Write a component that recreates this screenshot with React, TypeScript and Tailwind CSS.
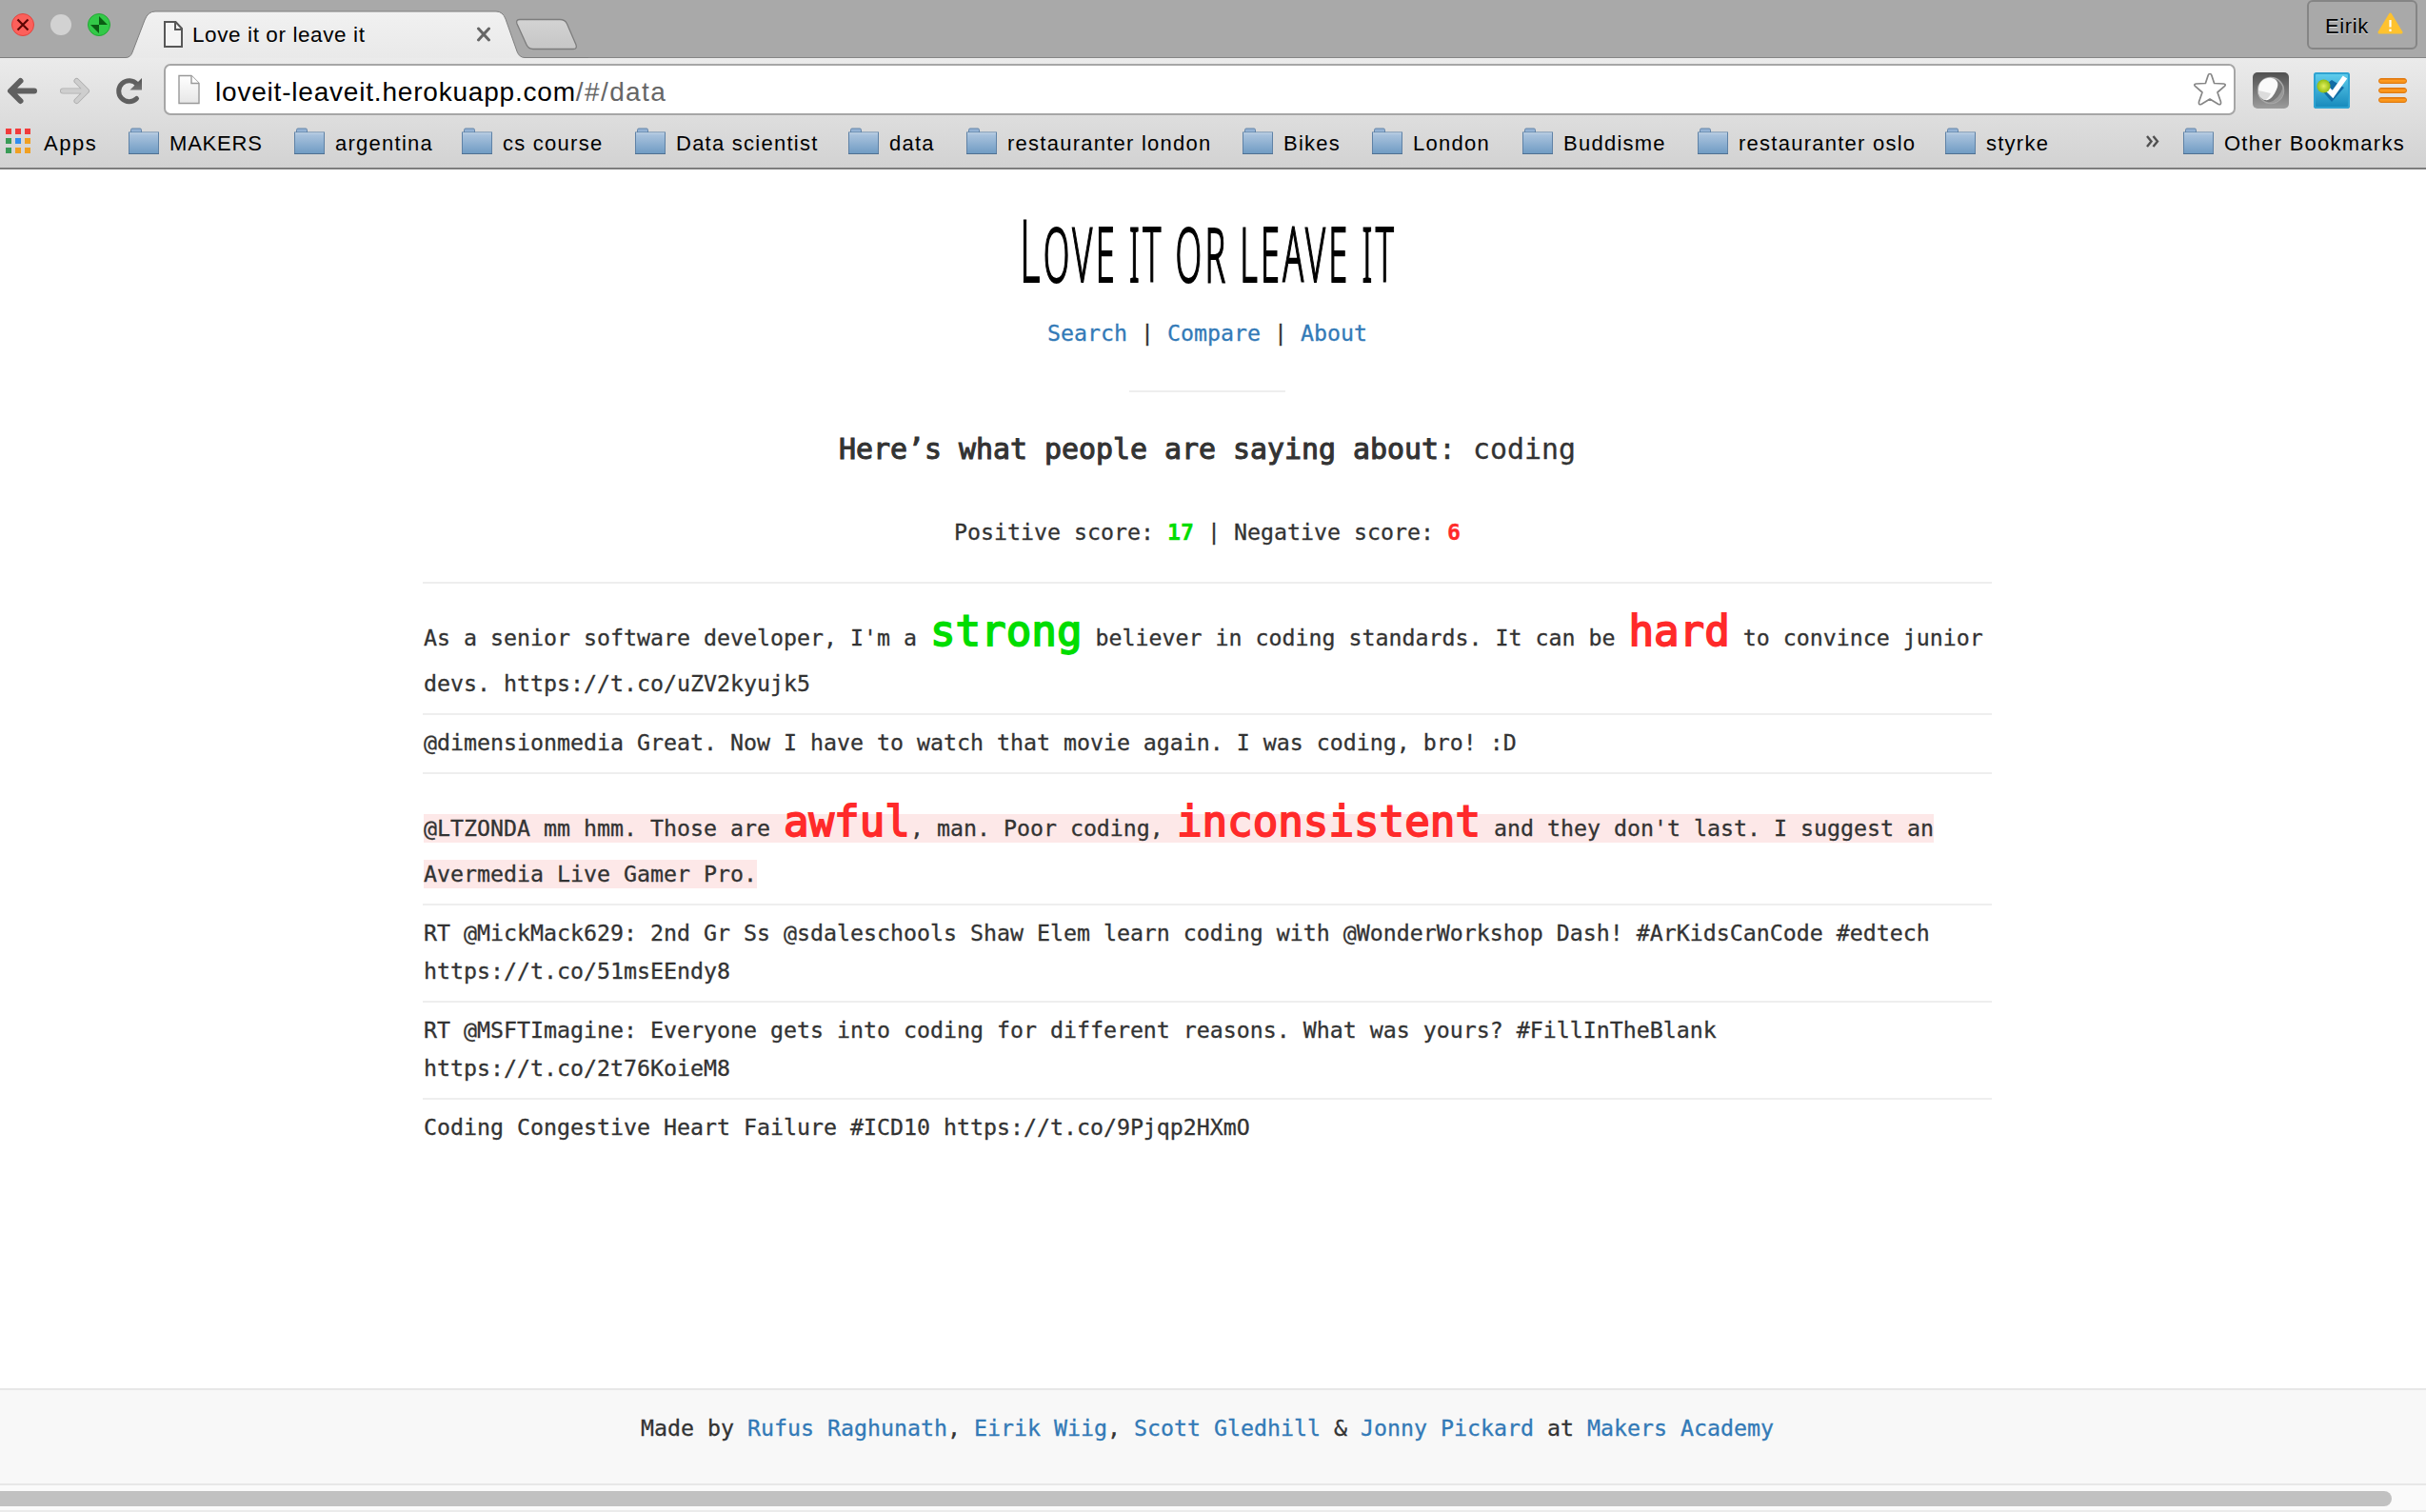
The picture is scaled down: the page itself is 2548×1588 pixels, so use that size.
import type { ReactNode } from "react";

type Bookmark = { label: string; width: string; tracking?: string };

const bookmarks: Bookmark[] = [
  { label: "MAKERS", width: "w-[174px]", tracking: "tracking-[0.8px]" },
  { label: "argentina", width: "w-[176px]" },
  { label: "cs course", width: "w-[182px]" },
  { label: "Data scientist", width: "w-[224px]" },
  { label: "data", width: "w-[124px]" },
  { label: "restauranter london", width: "w-[290px]" },
  { label: "Bikes", width: "w-[136px]" },
  { label: "London", width: "w-[158px]" },
  { label: "Buddisme", width: "w-[184px]" },
  { label: "restauranter oslo", width: "w-[260px]" },
  { label: "styrke", width: "w-[130px]" },
];

function FolderIcon() {
  return (
    <svg width="32" height="29" viewBox="0 0 32 29" className="shrink-0">
      <defs>
        <linearGradient id="folder" x1="0" y1="0" x2="0" y2="1">
          <stop offset="0" stopColor="#b0c7e0" />
          <stop offset="1" stopColor="#6f9bc3" />
        </linearGradient>
      </defs>
      <path d="M2.5 6V2.5Q2.5 1 4 1H12Q13.500 1 13.500 2.500V6" fill="#94b2d4" stroke="#6384a8" />
      <rect x=".5" y="5" width="31" height="22.500" fill="url(#folder)" stroke="#5f82a6" />
      <path d="M1 6H31" stroke="#c6d7e9" />
      <path d="M0 27.500H32" stroke="#4f7091" />
    </svg>
  );
}

function BookmarkItem({ label, width, tracking }: Bookmark) {
  return (
    <div className={`flex shrink-0 items-center gap-[11px] ${width}`}>
      <FolderIcon />
      <span className={`pt-[4px] whitespace-nowrap ${tracking ?? "tracking-[1.25px]"}`}>{label}</span>
    </div>
  );
}

function AppsIcon() {
  const rows = [
    ["#f13b3b", "#f13b3b", "#f13b3b"],
    ["#3a9c57", "#2f8ef0", "#f0a022"],
    ["#3a9c57", "#f0a022", "#f0a022"],
  ];
  return (
    <svg width="26" height="27" viewBox="0 0 26 27" className="shrink-0">
      {rows.map((row, y) =>
        row.map((fill, x) => (
          <rect key={`${x}-${y}`} x={x * 10} y={y * 10} width="6" height="6" fill={fill} />
        )),
      )}
    </svg>
  );
}

function TabStrip() {
  return (
    <div className="relative flex h-[61px] shrink-0 bg-[#a9a9a9]">
      <svg width="620" height="61" viewBox="0 0 620 61" className="absolute left-0 top-0">
        <defs>
          <linearGradient id="tab" x1="0" y1="0" x2="0" y2="1">
            <stop offset="0" stopColor="#f1f1f1" />
            <stop offset="1" stopColor="#e9e9e9" />
          </linearGradient>
          <linearGradient id="newTab" x1="0" y1="0" x2="0" y2="1">
            <stop offset="0" stopColor="#d3d3d3" />
            <stop offset="1" stopColor="#c6c6c6" />
          </linearGradient>
        </defs>
        <circle cx="24" cy="26" r="11.500" fill="#fc605b" stroke="#e2443f" />
        <path d="M18.500 20.500L29.500 31.500M29.500 20.500L18.500 31.500" stroke="#5c0604" strokeWidth="2.200" />
        <circle cx="64" cy="26" r="11" fill="#d2d2d2" />
        <circle cx="104" cy="26" r="11.500" fill="#33c948" stroke="#22a934" />
        <path d="M104 17V26H113ZM104 35V26H95Z" fill="#0b5c13" />
        <path
          d="M0 60.500H132Q137 60.500 139 55L152 21Q155.500 12 163 12H521Q528 12 531 20L543 54Q545.500 60.500 551 60.500H620V61H0Z"
          fill="url(#tab)"
        />
        <path
          d="M0 60.500H132Q137 60.500 139 55L152 21Q155.500 12 163 12H521Q528 12 531 20L543 54Q545.500 60.500 551 60.500H620"
          fill="none"
          stroke="#7f7f7f"
        />
        <path
          d="M546 20.500H588Q593.500 20.500 595.500 25L605 47Q606.500 51.500 602 51.500H560Q555 51.500 553 47L543 25Q541.500 20.500 546 20.500Z"
          fill="url(#newTab)"
          stroke="#7d7d7d"
          strokeWidth="1.300"
        />
        <path d="M173 23H184.500L191 30V49H173Z" fill="#f4f4f4" stroke="#575757" strokeWidth="2" />
        <path d="M184 23V31H191" fill="none" stroke="#575757" strokeWidth="2" />
        <path d="M502.500 30L513.500 42M513.500 30L502.500 42" stroke="#666" strokeWidth="3" strokeLinecap="round" />
      </svg>
      <div className="relative ml-[202px] pt-[22px] text-[22.5px] leading-[30px] tracking-[0.6px]">Love it or leave it</div>
      <div className="ml-auto mr-[9px] h-[61px]">
        <div className="flex h-[52px] w-[116px] items-center rounded-b-md rounded-t-md border-2 border-[#858585] pl-[17px]">
          <span className="pt-[3px] text-[22px] tracking-[0.6px] [text-shadow:0_1px_0_#ddd]">Eirik</span>
          <svg width="28" height="24" viewBox="0 0 28 24" className="mb-[3px] ml-[9px] shrink-0">
            <path d="M13.500 2L25 21H2Z" fill="#fec22f" stroke="#fec22f" strokeWidth="3" strokeLinejoin="round" />
            <path d="M13.500 8V15.500M13.500 17.500V20" stroke="#fff" strokeWidth="2.200" />
          </svg>
        </div>
      </div>
      <div className="absolute bottom-0 right-0 h-px w-[1930px] bg-[#858585]" />
    </div>
  );
}

function NavIcons() {
  return (
    <svg width="172" height="60" viewBox="0 61 172 60" className="shrink-0">
      <defs>
        <linearGradient id="nav" x1="0" y1="0" x2="0" y2="1">
          <stop offset="0" stopColor="#505050" />
          <stop offset="1" stopColor="#757575" />
        </linearGradient>
      </defs>
      <path d="M36 95.500H12M21.500 85L11 95.500L21.500 106" fill="none" stroke="#606060" strokeWidth="6" strokeLinecap="round" strokeLinejoin="round" />
      <path d="M66 95.500H90M80.500 85L91 95.500L80.500 106" fill="none" stroke="#adadad" strokeWidth="6" strokeLinecap="round" strokeLinejoin="round" />
      <path d="M66 95.500H90M80.500 85L91 95.500L80.500 106" fill="none" stroke="#cecece" strokeWidth="4.400" strokeLinecap="round" strokeLinejoin="round" />
      <path d="M144 88.500A11 11 0 1 0 143.500 103.500" fill="none" stroke="#5f5f5f" strokeWidth="5" strokeLinecap="round" />
      <path d="M149 82V94.500H136.500Z" fill="url(#nav)" />
    </svg>
  );
}

function AddressBar() {
  return (
    <div className="flex h-[54px] w-[2176px] shrink-0 items-center rounded-[7px] border-2 border-[#a6a6a6] bg-white pl-[13px] pr-[7px]">
      <svg width="24" height="32" viewBox="0 0 24 32" className="shrink-0">
        <defs>
          <linearGradient id="page" x1="0" y1="0" x2="0" y2="1">
            <stop offset="0" stopColor="#fff" />
            <stop offset="1" stopColor="#e6e6e6" />
          </linearGradient>
        </defs>
        <path d="M1 1.500H14L22 9.500V30.500H1Z" fill="url(#page)" stroke="#999" strokeWidth="1.400" />
        <path d="M14 1.500V9.500H22" fill="#fff" stroke="#999" strokeWidth="1.400" />
      </svg>
      <div className="ml-[15px] pt-[5px] whitespace-nowrap text-[28px] leading-[40px] tracking-[0.8px] text-black">
        loveit-leaveit.herokuapp.com<span className="tracking-[1.4px] text-[#666]">/#/data</span>
      </div>
      <svg width="36" height="36" viewBox="0 0 36 36" className="ml-auto shrink-0">
        <path
          d="M18 1.500Q19.300 1.500 19.800 3L22.600 11.500L32.500 12Q35.500 12.500 33.300 14.700L26 21L29.500 31Q30 34.500 27 33.500L18 28L9 33.500Q6 34.500 6.500 31L10 21L2.700 14.700Q.5 12.500 3.500 12L13.400 11.500L16.200 3Q16.700 1.500 18 1.500Z"
          fill="#fff"
          stroke="#868686"
          strokeWidth="1.700"
          strokeLinejoin="round"
        />
      </svg>
    </div>
  );
}

function ToolbarIcons() {
  return (
    <svg width="200" height="60" viewBox="2348 61 200 60" className="shrink-0">
      <defs>
        <linearGradient id="ext" x1="0" y1="0" x2="0" y2="1">
          <stop offset="0" stopColor="#505050" />
          <stop offset="1" stopColor="#9c9c9c" />
        </linearGradient>
        <linearGradient id="blue" x1="0" y1="0" x2="0" y2="1">
          <stop offset="0" stopColor="#62d0ef" />
          <stop offset="1" stopColor="#1487ba" />
        </linearGradient>
        <linearGradient id="bar" x1="0" y1="0" x2="0" y2="1">
          <stop offset="0" stopColor="#d96a0b" />
          <stop offset=".4" stopColor="#ff9b1f" />
          <stop offset="1" stopColor="#f08c14" />
        </linearGradient>
        <radialGradient id="green">
          <stop offset="0" stopColor="#e2ef5c" />
          <stop offset="1" stopColor="#93bd12" />
        </radialGradient>
      </defs>
      <rect x="2366" y="76" width="38" height="38" rx="5" fill="url(#ext)" />
      <circle cx="2385" cy="95" r="13.500" fill="#777" stroke="#a8a8a8" strokeWidth="1.500" />
      <path d="M2398 91A13.500 13.500 0 0 1 2382 108Q2394 105 2398 91Z" fill="#999" />
      <path d="M2372 95C2372 86 2378 81 2386 82C2392 83 2394 88 2391 94C2388 101 2384 106 2379 105C2374 103 2372 100 2372 95Z" fill="#fafafa" />
      <path d="M2372 95L2385 98Q2382 105 2378 105Q2372 102 2372 95Z" fill="#dcdcdc" />
      <rect x="2430" y="76" width="38" height="38" rx="3" fill="url(#blue)" />
      <rect x="2431" y="77" width="36" height="36" rx="2" fill="none" stroke="#2fa3d1" strokeWidth="2" />
      <path d="M2437 93L2449 107L2462 92L2449 84Z" fill="#126da5" />
      <path d="M2445 94L2450 99L2463 81" fill="none" stroke="#fff" strokeWidth="5.500" />
      <circle cx="2440.500" cy="90.500" r="7" fill="url(#green)" />
      {[82, 92, 102].map((y) => (
        <rect key={y} x="2498.500" y={y + 0.5} width="29" height="5" rx="2.500" fill="url(#bar)" stroke="#e07a10" />
      ))}
    </svg>
  );
}

function BrowserChrome() {
  return (
    <header className="flex h-[178px] shrink-0 flex-col border-b-2 border-[#7d7d7d] font-['Liberation_Sans',Arial,sans-serif] text-[22px] text-black [-webkit-text-stroke:0px]">
      <TabStrip />
      <div className="flex min-h-0 flex-1 flex-col bg-linear-to-b from-[#ebebeb] to-[#d2d2d2]">
        <div className="flex h-[60px] items-end">
          <NavIcons />
          <AddressBar />
          <ToolbarIcons />
        </div>
        <div className="flex h-[54px] items-center pl-[6px]">
          <div className="flex w-[129px] items-center gap-[14px]">
            <AppsIcon />
            <span className="pt-[4px] tracking-[1.5px]">Apps</span>
          </div>
          {bookmarks.map((b) => (
            <BookmarkItem key={b.label} {...b} />
          ))}
          <svg width="14" height="13" viewBox="0 0 14 13" className="ml-auto mr-[25px] shrink-0">
            <path d="M1 1L5.500 6.500L1 12M7.500 1L12 6.500L7.500 12" fill="none" stroke="#505050" strokeWidth="2.400" />
          </svg>
          <BookmarkItem label="Other Bookmarks" width="w-[255px]" />
        </div>
      </div>
    </header>
  );
}

function Link({ children }: { children: ReactNode }) {
  return <a className="text-[#337ab7]">{children}</a>;
}

function Big({ tone, children }: { tone: "good" | "bad"; children: ReactNode }) {
  const color = tone === "good" ? "text-[#00dd00]" : "text-[#ff2a2a]";
  return (
    <strong className={`text-[44.18px] leading-[0] font-normal [-webkit-text-stroke:1.8px_currentColor] ${color}`}>
      {children}
    </strong>
  );
}

function Line({ tall, children }: { tall?: boolean; children: ReactNode }) {
  return <div className={tall ? "pt-5 leading-[56px]" : "leading-[40px]"}>{children}</div>;
}

function Row({ children }: { children: ReactNode }) {
  return <li className="border-t-2 border-[#eee] pt-[9px] pb-[11px] whitespace-nowrap">{children}</li>;
}

const marked = "bg-[#fde8e8] pt-[1px] pb-[2px]";

export default function App() {
  return (
    <div className="flex h-[1588px] w-[2548px] flex-col overflow-hidden bg-white font-['DejaVu_Sans_Mono','Liberation_Mono',monospace] text-[23.254px] text-[#333] [-webkit-text-stroke:0.3px_currentColor]">
      <BrowserChrome />
      <main className="flex w-[2536px] flex-1 flex-col items-center">
        <h1 className="mt-[32px] h-[110px] origin-center scale-x-[0.45] pl-[6px] whitespace-nowrap font-['Noto_Sans',sans-serif] text-[80px] leading-[110px] font-light tracking-[7.4px] [word-spacing:-2px] text-black uppercase [-webkit-text-stroke:2px_#000]">
          <span className="text-[91px] leading-[0]">L</span>ove it or leave it
        </h1>
        <nav className="mt-[10px] leading-[40px]">
          <Link>Search</Link> | <Link>Compare</Link> | <Link>About</Link>
        </nav>
        <div className="mt-[40px] h-[2px] w-[164px] bg-[#eee]" />
        <h2 className="mt-[34px] text-[29.9px] leading-[52px]">
          <span className="[-webkit-text-stroke:1.1px_#333]">Here’s what people are saying about</span>: coding
        </h2>
        <p className="mt-[41px] leading-[40px]">
          Positive score: <b className="text-[#00dd00]">17</b> | Negative score: <b className="text-[#ff2a2a]">6</b>
        </p>
        <ul className="mt-[32px] w-[1648px] [&_li]:pl-px">
          <Row>
            <Line tall>
              As a senior software developer, I'm a <Big tone="good">strong</Big> believer in coding standards. It can be{" "}
              <Big tone="bad">hard</Big> to convince junior
            </Line>
            <Line>devs. https://t.co/uZV2kyujk5</Line>
          </Row>
          <Row>
            <Line>@dimensionmedia Great. Now I have to watch that movie again. I was coding, bro! :D</Line>
          </Row>
          <Row>
            <Line tall>
              <span className={marked}>
                @LTZONDA mm hmm. Those are <Big tone="bad">awful</Big>, man. Poor coding, <Big tone="bad">inconsistent</Big> and they
                don't last. I suggest an
              </span>
            </Line>
            <Line>
              <span className={marked}>Avermedia Live Gamer Pro.</span>
            </Line>
          </Row>
          <Row>
            <Line>RT @MickMack629: 2nd Gr Ss @sdaleschools Shaw Elem learn coding with @WonderWorkshop Dash! #ArKidsCanCode #edtech</Line>
            <Line>https://t.co/51msEEndy8</Line>
          </Row>
          <Row>
            <Line>RT @MSFTImagine: Everyone gets into coding for different reasons. What was yours? #FillInTheBlank</Line>
            <Line>https://t.co/2t76KoieM8</Line>
          </Row>
          <Row>
            <Line>Coding Congestive Heart Failure #ICD10 https://t.co/9Pjqp2HXmO</Line>
          </Row>
        </ul>
      </main>
      <footer className="h-[102px] shrink-0 border-y-2 border-[#e7e7e7] bg-[#f8f8f8] pt-[20px]">
        <p className="w-[2536px] text-center leading-[40px]">
          Made by <Link>Rufus Raghunath</Link>, <Link>Eirik Wiig</Link>, <Link>Scott Gledhill</Link> &amp; <Link>Jonny Pickard</Link> at{" "}
          <Link>Makers Academy</Link>
        </p>
      </footer>
      <div className="h-[28px] shrink-0 border-b-2 border-[#ebebeb] bg-[#fafafa] pt-[6px]">
        <div className="h-4 w-[2512px] rounded-r-full bg-[#c1c1c1]" />
      </div>
    </div>
  );
}
